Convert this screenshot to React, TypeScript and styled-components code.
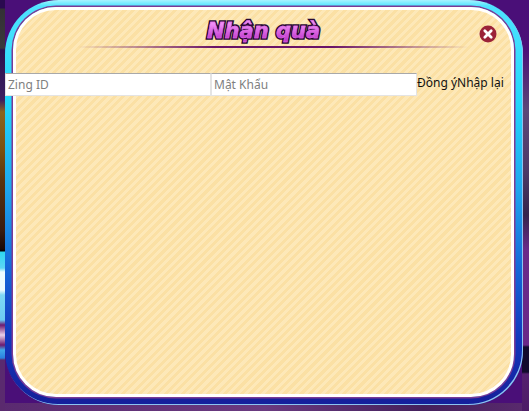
import React from "react";
import styled, { createGlobalStyle } from "styled-components";

const Global = createGlobalStyle`
  html, body { margin: 0; padding: 0; background: #4a1a6a; }
  #root { width: 529px; height: 411px; overflow: hidden; }
`;

const Scene = styled.div`
  width: 529px;
  height: 411px;
  box-sizing: border-box;
  padding-left: 5px;
  overflow: hidden;
  background:
    linear-gradient(to bottom,
      #2a0a50 0, #2a0a50 8px, #333036 9px, #3a3a3c 48px, #2c1250 50px, #3d2060 100px,
      #8a6420 112px, #7a5010 150px, #5a3410 180px, #3a1c10 230px, #1a0808 249px, #000 251px,
      #2fd8f0 252px, #5cd6f5 268px, #eefcff 272px, #eefcff 290px, #7cd8f5 295px, #6ccaf2 320px,
      #6c1a70 325px, #e8d0e8 335px, #6c1a70 345px, #40a8ea 350px, #2a80e0 358px, #5a2a70 360px, #5a2a6e 411px)
      left top / 5px 411px no-repeat,
    linear-gradient(to bottom,
      #4a0f78 0, #4c1078 50px, #5c4878 110px, #4e3a68 170px, #35254c 215px, #6a2a8a 250px,
      #6a2888 345px, #120a2c 347px, #120a2c 372px, #55206f 374px, #4d1c66 411px)
      right top / 7px 411px no-repeat,
    linear-gradient(to right, #5a2a70, #6a3a80 50%, #44205c 80%, #5a2a6e) left bottom / 100% 8px no-repeat,
    #4a0f78;
`;

const Frame = styled.section`
  width: 518px;
  height: 405px;
  box-sizing: border-box;
  padding: 7px 9px 8px 8px;
  border-radius: 54px;
  background: linear-gradient(to bottom,
    #a8f4ff 0, #4fe4ff 6px, #22d8fb 100px, #1ea6ee 190px, #1466d8 270px, #1236bc 340px, #15209c 400px);
  box-shadow: inset -1px -1px 0 #8cc4f0;
`;

const Panel = styled.div`
  height: 100%;
  box-sizing: border-box;
  padding-top: 7px;
  position: relative;
  border-radius: 43px;
  border: 3px solid #fff;
  box-shadow: 0 0 0 1.5px #7a3a96;
  background: repeating-linear-gradient(-45deg, #fde8b8 0, #fde8b8 3px, #fbe0a4 3px, #fbe0a4 6px);
`;

const Header = styled.header`
  display: flex;
  flex-direction: column;
  align-items: center;
`;

const Title = styled.h1`
  position: relative;
  margin: 0;
  height: 29px;
  font: italic 700 21px/29px "DejaVu Sans", "Liberation Sans", sans-serif;
  color: #1f0a26;
  white-space: nowrap;
  -webkit-text-stroke: 3.5px #2a0a34;
  &::after {
    content: attr(data-text);
    position: absolute;
    inset: 0;
    -webkit-text-stroke: 0.4px #e070ea;
    color: transparent;
    background: linear-gradient(to bottom, #f08cf6 25%, #c33ccf 75%);
    -webkit-background-clip: text;
    background-clip: text;
  }
`;

const Rule = styled.div`
  width: 392px;
  height: 2px;
  margin-left: 18px;
  background: linear-gradient(to right, rgba(106, 20, 104, 0), #6a1468 35%, #6a1468 65%, rgba(106, 20, 104, 0));
`;

const Close = styled.button`
  position: absolute;
  top: 15px;
  right: 14px;
  width: 18px;
  height: 18px;
  padding: 0;
  border: 0;
  background: none;
  display: block;
  cursor: pointer;
`;

const Form = styled.form`
  display: flex;
  align-items: flex-start;
  margin: 25px 0 0 -11px;
  font: 12px/16px "Noto Sans", sans-serif;
  color: #111;
`;

const Field = styled.input`
  width: 206px;
  height: 23px;
  box-sizing: border-box;
  flex: none;
  margin: 0;
  padding: 0 2px;
  background: #fff;
  border: 0;
  border-top: 1px solid #a9a9a9;
  border-bottom: 1px solid #e4e4e4;
  border-left: 1px solid #e4e4e4;
  border-right: 1px solid #e4e4e4;
  font: 12px "Noto Sans", sans-serif;
  outline: none;
  &::placeholder { color: #808080; opacity: 1; }
`;

const TextAction = styled.button`
  flex: none;
  padding: 0;
  margin: 2px 0 0;
  border: 0;
  background: none;
  color: #111;
  font: inherit;
  white-space: nowrap;
`;

export default function App() {
  return (
    <>
      <Global />
      <Scene>
        <Frame>
          <Panel>
            <Header>
              <Title data-text="Nhận quà">Nhận quà</Title>
              <Rule />
            </Header>
            <Close type="button" aria-label="Đóng">
              <svg width="18" height="18" viewBox="0 0 18 18">
                <circle cx="9" cy="9" r="8.5" fill="#9b2238" />
                <path d="M5.8 5.8 12.2 12.2M12.2 5.8 5.8 12.2" stroke="#fff" strokeWidth="2.8" strokeLinecap="round" />
              </svg>
            </Close>
            <Form>
              <Field placeholder="Zing ID" />
              <Field placeholder="Mật Khẩu" />
              <TextAction type="button">Đồng ý</TextAction>
              <TextAction type="button">Nhập lại</TextAction>
            </Form>
          </Panel>
        </Frame>
      </Scene>
    </>
  );
}
